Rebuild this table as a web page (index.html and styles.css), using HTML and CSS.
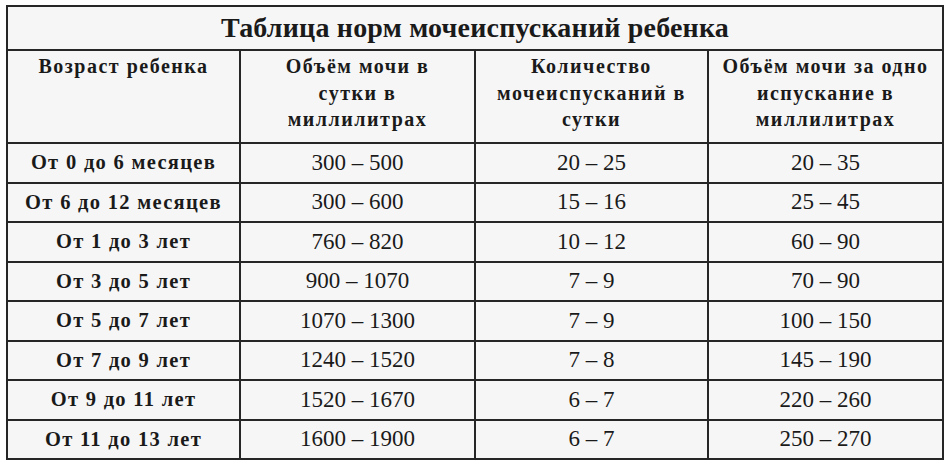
FILE: index.html
```html
<!DOCTYPE html>
<html lang="ru">
<head>
<meta charset="utf-8">
<title>Таблица норм мочеиспусканий ребенка</title>
<link rel="stylesheet" href="styles.css">
</head>
<body>
<table class="norms">
  <colgroup>
    <col class="c1"><col class="c2"><col class="c3"><col class="c4">
  </colgroup>
  <thead>
    <tr class="title-row"><th colspan="4" class="title">Таблица норм мочеиспусканий ребенка</th></tr>
    <tr class="head-row">
      <th>Возраст ребенка</th>
      <th>Объём мочи в<br>сутки в<br>миллилитрах</th>
      <th>Количество<br>мочеиспусканий в<br>сутки</th>
      <th>Объём мочи за одно<br>испускание в<br>миллилитрах</th>
    </tr>
  </thead>
  <tbody>
    <tr><th>От 0 до 6 месяцев</th><td>300 – 500</td><td>20 – 25</td><td>20 – 35</td></tr>
    <tr><th>От 6 до 12 месяцев</th><td>300 – 600</td><td>15 – 16</td><td>25 – 45</td></tr>
    <tr><th>От 1 до 3 лет</th><td>760 – 820</td><td>10 – 12</td><td>60 – 90</td></tr>
    <tr><th>От 3 до 5 лет</th><td>900 – 1070</td><td>7 – 9</td><td>70 – 90</td></tr>
    <tr><th>От 5 до 7 лет</th><td>1070 – 1300</td><td>7 – 9</td><td>100 – 150</td></tr>
    <tr><th>От 7 до 9 лет</th><td>1240 – 1520</td><td>7 – 8</td><td>145 – 190</td></tr>
    <tr><th>От 9 до 11 лет</th><td>1520 – 1670</td><td>6 – 7</td><td>220 – 260</td></tr>
    <tr><th>От 11 до 13 лет</th><td>1600 – 1900</td><td>6 – 7</td><td>250 – 270</td></tr>
  </tbody>
</table>
</body>
</html>
```
FILE: styles.css
```css
html, body {
  margin: 0;
  padding: 0;
  background: #ffffff;
}
body {
  padding: 5px 6px 0 6px;
  font-family: "Liberation Serif", "Times New Roman", serif;
  color: #1a1a1a;
}
.norms {
  width: 936px;
  border-collapse: collapse;
  table-layout: fixed;
  background: #f6f6f6;
  border: 2px solid #262626;
}
.norms .c1 { width: 233px; }
.norms .c2 { width: 235px; }
.norms .c3 { width: 233px; }
.norms .c4 { width: 235px; }
.norms th, .norms td {
  border: 2px solid #262626;
  padding: 0;
  text-align: center;
}
.title-row { height: 44px; }
.title {
  font-size: 28px;
  font-weight: bold;
  letter-spacing: 0.2px;
  vertical-align: middle;
}
.head-row { height: 93px; }
.head-row th {
  font-size: 20px;
  font-weight: bold;
  letter-spacing: 1.5px;
  line-height: 26.5px;
  vertical-align: top;
  padding-top: 2px;
}
tbody tr { height: 39.5px; }
tbody th {
  font-size: 20.5px;
  font-weight: bold;
  letter-spacing: 1.3px;
  vertical-align: middle;
}
tbody td {
  font-size: 23px;
  font-weight: normal;
  vertical-align: middle;
}
```
